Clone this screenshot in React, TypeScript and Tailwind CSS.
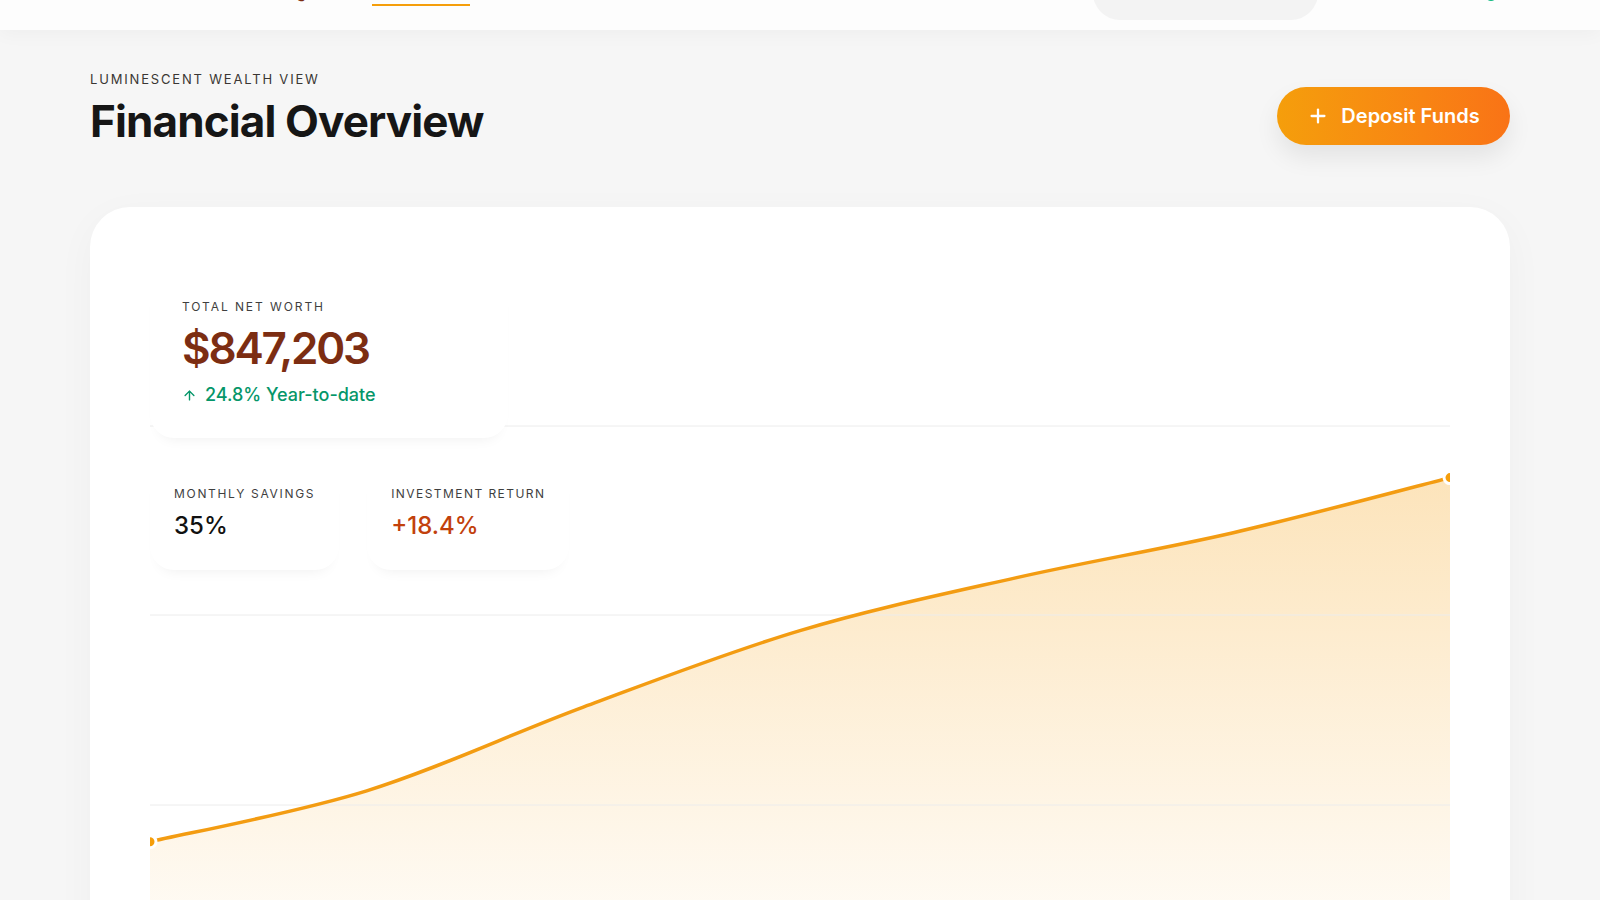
import React from "react";
import { Plus, ArrowUp, Search, Bell } from "lucide-react";

const PTS: [number, number][] = [
  [0, 574.8],
  [216.7, 523.8],
  [433.3, 440.1],
  [650, 363.6],
  [866.7, 310.6],
  [1083.3, 265.7],
  [1300, 210.6],
];

function smoothPath(p: [number, number][]): string {
  let d = `M ${p[0][0]} ${p[0][1]}`;
  for (let i = 0; i < p.length - 1; i++) {
    const p0 = p[i - 1] || p[i];
    const p1 = p[i];
    const p2 = p[i + 1];
    const p3 = p[i + 2] || p2;
    const c1x = p1[0] + (p2[0] - p0[0]) / 6;
    const c1y = p1[1] + (p2[1] - p0[1]) / 6;
    const c2x = p2[0] - (p3[0] - p1[0]) / 6;
    const c2y = p2[1] - (p3[1] - p1[1]) / 6;
    d += ` C ${c1x} ${c1y}, ${c2x} ${c2y}, ${p2[0]} ${p2[1]}`;
  }
  return d;
}

function Chart() {
  const line = smoothPath(PTS);
  const area = `${line} L 1300 760 L 0 760 Z`;
  return (
    <svg width="1300" height="760" viewBox="0 0 1300 760" className="block">
      <defs>
        <linearGradient id="fillG" x1="0" y1="210" x2="0" y2="640" gradientUnits="userSpaceOnUse">
          <stop offset="0" stopColor="#f59e0b" stopOpacity="0.28" />
          <stop offset="1" stopColor="#f59e0b" stopOpacity="0.05" />
        </linearGradient>
      </defs>
      <path d={area} fill="url(#fillG)" />
      {[159, 348, 538].map((y) => (
        <line key={y} x1="0" x2="1300" y1={y} y2={y} stroke="#ececec" strokeWidth="1" />
      ))}
      <path d={line} fill="none" stroke="#f39c12" strokeWidth="3.5" strokeLinecap="round" />
      <circle cx="1300" cy="210.6" r="6" fill="#f59e0b" stroke="#ffffff" strokeWidth="3" />
      <circle cx="0" cy="574.8" r="6" fill="#f59e0b" stroke="#ffffff" strokeWidth="3" />
    </svg>
  );
}

export default function App() {
  return (
    <div
      className="h-[900px] overflow-hidden bg-[#f6f6f6]"
      style={{ fontFamily: "Inter, 'Noto Sans', sans-serif" }}
    >
      <header className="-mt-[42px] h-[72px] bg-[#fdfdfd] px-[90px] flex items-start shadow-[0_4px_18px_rgba(0,0,0,0.035)] relative z-10">
        <div className="w-[147px] mt-[6px] h-[28px] flex items-center gap-2">
          <div className="w-7 h-7 rounded-full bg-gradient-to-br from-[#f59e0b] to-[#f97316]" />
          <span className="text-[17px] font-bold text-[#1a1a1a]">Lumina</span>
        </div>
        <nav className="flex items-start gap-[59px] mt-[24px] text-[15px] font-medium">
          <a className="px-[7px] leading-[22px] border-b-2 border-transparent text-[#7c2d12]">Planning</a>
          <a className="px-[7px] leading-[22px] border-b-2 border-[#f59e0b] text-[#1a1a1a] w-[98px] text-center">Investments</a>
          <a className="px-[7px] leading-[22px] border-b-2 border-transparent text-[#6b6b6b]">Assets</a>
        </nav>
        <div className="ml-auto flex items-start">
          <div className="mt-[8px] h-[54px] w-[225px] rounded-full bg-[#f3f3f3] flex items-center gap-2 px-5 text-[14px] text-[#9a9a9a]">
            <Search size={16} />
            <span>Search</span>
          </div>
          <div className="w-[167px] flex justify-center mt-[4px]">
            <Bell size={18} className="text-[#555]" />
          </div>
          <div className="mt-[31px] w-3 h-3 rounded-full bg-[#10b981] mr-[13px]" />
        </div>
      </header>

      <main className="px-[90px] pt-[39px]">
        <div className="flex items-end justify-between">
          <div>
            <p className="text-[13px] leading-[20px] tracking-[0.14em] text-[#3a3633]">LUMINESCENT WEALTH VIEW</p>
            <h1 className="mt-2 text-[44px] leading-[48px] font-bold tracking-[-0.02em] text-[#161616]">
              Financial Overview
            </h1>
          </div>
          <button className="h-[58px] w-[233px] rounded-full bg-gradient-to-r from-[#f59e0b] to-[#f97316] text-white flex items-center justify-center gap-3 text-[20px] font-semibold shadow-[0_12px_24px_rgba(0,0,0,0.08)]">
            <Plus size={22} strokeWidth={2.5} />
            <span>Deposit Funds</span>
          </button>
        </div>

        <section className="mt-[62px] bg-white rounded-[40px] p-[60px] shadow-[0_10px_40px_rgba(0,0,0,0.035)]">
          <div className="relative h-[760px]">
            <Chart />
            <div className="absolute top-0 left-0 flex flex-col gap-4">
              <div className="w-[358px] bg-white rounded-[24px] px-8 pt-8 pb-8 shadow-[0_10px_14px_-10px_rgba(0,0,0,0.07)]">
                <p className="text-[12px] leading-[16px] tracking-[0.16em] text-[#3f3f3f]">TOTAL NET WORTH</p>
                <p className="mt-[7px] text-[44px] leading-[52px] font-semibold tracking-[-0.05em] text-[#7c2d12]">$847,203</p>
                <p className="mt-[10px] flex items-center gap-2 text-[18px] leading-[22px] font-medium text-[#059669]">
                  <ArrowUp size={15} strokeWidth={2.25} />
                  <span>24.8% Year-to-date</span>
                </p>
              </div>
              <div className="flex gap-7">
                <div className="bg-white rounded-[24px] px-6 pt-8 pb-7 shadow-[0_10px_14px_-10px_rgba(0,0,0,0.07)]">
                  <p className="text-[12px] leading-[16px] tracking-[0.14em] text-[#3f3f3f]">MONTHLY SAVINGS</p>
                  <p className="mt-2 text-[24px] leading-[32px] font-medium text-[#111111]">35%</p>
                </div>
                <div className="bg-white rounded-[24px] px-6 pt-8 pb-7 shadow-[0_10px_14px_-10px_rgba(0,0,0,0.07)]">
                  <p className="text-[12px] leading-[16px] tracking-[0.12em] text-[#3f3f3f]">INVESTMENT RETURN</p>
                  <p className="mt-2 text-[24px] leading-[32px] font-medium text-[#c2410c]">+18.4%</p>
                </div>
              </div>
            </div>
          </div>
        </section>
      </main>
    </div>
  );
}
